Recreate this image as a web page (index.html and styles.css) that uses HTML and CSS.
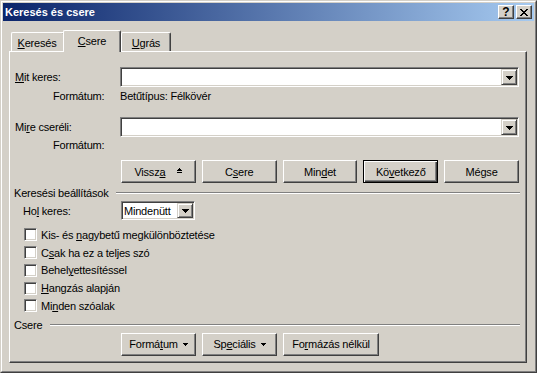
FILE: index.html
```html
<!DOCTYPE html>
<html lang="hu">
<head>
  <meta charset="UTF-8">
  <title>Keresés és csere</title>
  <link rel="stylesheet" href="styles.css">
</head>
<body>
<div class="window">
  <div class="frame">
    <div class="titlebar">
      <span class="title">Keresés és csere</span>
      <div class="tbtns">
        <span class="tbtn help">?</span>
        <span class="tbtn">
          <svg width="8" height="7" viewBox="0 0 8 7"><path d="M0 0h2v1h1v1h2V1h1V0h2v1H7v1H6v1H5v1h1v1h1v1h1v1H6V6H5V5H3v1H2v1H0V6h1V5h1V4h1V3H2V2H1V1H0z" fill="#000"/></svg>
        </span>
      </div>
    </div>

    <div class="client">
      <div class="tabs">
        <div class="tab first"><u>K</u>eresés</div>
        <div class="tab active"><u>C</u>sere</div>
        <div class="tab"><u>U</u>grás</div>
      </div>

      <div class="panel">
        <div class="row r-combo">
          <span class="lbl"><u>M</u>it keres:</span>
          <div class="combo"><span class="dd"><svg width="7" height="4" viewBox="0 0 7 4"><path d="M0 0h7v1H6v1H5v1H4v1H3V3H2V2H1V1H0z"/></svg></span></div>
        </div>
        <div class="row r-fmt">
          <span class="lbl sub">Formátum:</span>
          <span>Betűtípus: Félkövér</span>
        </div>
        <div class="row r-combo r-second">
          <span class="lbl">Mi<u>r</u>e cseréli:</span>
          <div class="combo"><span class="dd"><svg width="7" height="4" viewBox="0 0 7 4"><path d="M0 0h7v1H6v1H5v1H4v1H3V3H2V2H1V1H0z"/></svg></span></div>
        </div>
        <div class="row r-fmt2">
          <span class="lbl sub">Formátum:</span>
        </div>

        <div class="row btnrow">
          <span class="btn"><span>Vissz<u>a</u></span>
            <svg class="up" width="5" height="5" viewBox="0 0 5 5"><path d="M2 0h1v1h1v1h1v1H0V2h1V1h1zM0 4h5v1H0z"/></svg>
          </span>
          <span class="btn"><span>C<u>s</u>ere</span></span>
          <span class="btn"><span>Min<u>d</u>et</span></span>
          <span class="btn default"><span>Kö<u>v</u>etkező</span></span>
          <span class="btn"><span>Mégse</span></span>
        </div>

        <div class="row group">
          <span>Keresési beállítások</span>
          <span class="sep"></span>
        </div>

        <div class="row r-where">
          <span class="lbl where">Ho<u>l</u> keres:</span>
          <div class="combo small"><span class="val">Mindenütt</span><span class="dd"><svg width="7" height="4" viewBox="0 0 7 4"><path d="M0 0h7v1H6v1H5v1H4v1H3V3H2V2H1V1H0z"/></svg></span></div>
        </div>

        <div class="checks">
          <div class="chk"><span class="box"></span><span>Kis- és <u>n</u>agybetű megkülönböztetése</span></div>
          <div class="chk"><span class="box"></span><span>C<u>s</u>ak ha ez a teljes szó</span></div>
          <div class="chk"><span class="box"></span><span>Behel<u>y</u>ettesítéssel</span></div>
          <div class="chk"><span class="box"></span><span><u>H</u>angzás alapján</span></div>
          <div class="chk"><span class="box"></span><span>Mi<u>n</u>den szóalak</span></div>
        </div>

        <div class="row group group2">
          <span>Csere</span>
          <span class="sep"></span>
        </div>

        <div class="row btnrow btnrow2">
          <span class="btn"><span>Formá<u>t</u>um</span>
            <svg class="down" width="5" height="3" viewBox="0 0 5 3"><path d="M0 0h5v1H4v1H3v1H2V2H1V1H0z"/></svg>
          </span>
          <span class="btn"><span>Sp<u>e</u>ciális</span>
            <svg class="down" width="5" height="3" viewBox="0 0 5 3"><path d="M0 0h5v1H4v1H3v1H2V2H1V1H0z"/></svg>
          </span>
          <span class="btn wide"><span>Fo<u>r</u>mázás nélkül</span></span>
        </div>
      </div>
    </div>
  </div>
</div>
</body>
</html>
```

FILE: styles.css
```css
* {
  margin: 0;
  padding: 0;
  box-sizing: border-box;
}
body {
  font-family: "Liberation Sans", Arial, sans-serif;
  font-size: 11px;
  letter-spacing: -0.2px;
  color: #000;
  background: #d4d0c8;
}
u {
  text-decoration: underline;
  text-underline-offset: 1px;
}

/* window frame */
.window {
  width: 537px;
  height: 373px;
  border: 1px solid;
  border-color: #d4d0c8 #404040 #404040 #d4d0c8;
  background: #d4d0c8;
}
.frame {
  height: 100%;
  border: 1px solid;
  border-color: #fff #808080 #808080 #fff;
  padding: 1px;
  display: flex;
  flex-direction: column;
}
.titlebar {
  height: 18px;
  display: flex;
  align-items: center;
  justify-content: space-between;
  padding: 0 2px;
  background: linear-gradient(to right, #0a246a, #a6caf0);
}
.title {
  color: #fff;
  font-weight: bold;
  letter-spacing: 0;
}
.tbtns {
  display: flex;
  gap: 2px;
}
.tbtn {
  width: 16px;
  height: 14px;
  display: flex;
  align-items: center;
  justify-content: center;
  border: 1px solid;
  border-color: #fff #404040 #404040 #fff;
  box-shadow: inset -1px -1px #808080;
  background: #d4d0c8;
}
.tbtn svg {
  display: block;
}
.help {
  font-weight: bold;
  font-size: 12px;
  line-height: 12px;
  letter-spacing: 0;
}

/* client */
.client {
  flex: 1;
  display: flex;
  flex-direction: column;
  padding: 9px 7px 7px 6px;
}
.tabs {
  height: 21px;
  display: flex;
  align-items: flex-end;
  padding-left: 2px;
}
.tab {
  height: 19px;
  width: 50px;
  padding-top: 3px;
  line-height: 14px;
  text-align: center;
  border-top: 1px solid #fff;
  border-left: 1px solid #fff;
  border-right: 1px solid #404040;
  border-radius: 2px 2px 0 0;
  box-shadow: inset -1px 0 #808080;
}
.tab.first {
  width: 54px;
  padding-right: 2px;
}
.tab.active {
  width: 58px;
  height: 22px;
  margin-left: -2px;
  margin-bottom: -1px;
  position: relative;
  background: #d4d0c8;
}
.panel {
  height: 312px;
  border: 1px solid;
  border-color: #fff #404040 #404040 #fff;
  box-shadow: inset -1px -1px #808080;
  padding: 15px 7px 0 5px;
  display: flex;
  flex-direction: column;
}

/* rows */
.row {
  display: flex;
  align-items: center;
}
.lbl {
  width: 105px;
  flex: none;
}
.lbl.sub {
  padding-left: 38px;
}
.r-combo {
  height: 20px;
}
.r-second {
  margin-top: 12px;
}
.r-fmt {
  height: 18px;
}
.r-fmt2 {
  height: 16px;
}
.combo {
  flex: 1;
  height: 20px;
  display: flex;
  align-items: center;
  justify-content: flex-end;
  padding: 1px;
  border: 1px solid;
  border-color: #808080 #fff #fff #808080;
  box-shadow: inset 1px 1px #404040, inset -1px -1px #d4d0c8;
  background: #fff;
}
.dd {
  width: 16px;
  height: 16px;
  display: flex;
  align-items: center;
  justify-content: center;
  border: 1px solid;
  border-color: #d4d0c8 #404040 #404040 #d4d0c8;
  box-shadow: inset 1px 1px #fff, inset -1px -1px #808080;
  background: #d4d0c8;
}
.dd svg {
  display: block;
  margin-top: 1px;
}
.combo.small {
  flex: none;
  width: 74px;
  height: 19px;
  justify-content: space-between;
}
.combo.small .dd {
  height: 15px;
}
.val {
  padding-left: 1px;
}

/* buttons */
.btnrow {
  margin-top: 7px;
  padding-left: 106px;
  gap: 6px;
}
.btnrow2 {
  margin-top: 1px;
}
.btn {
  width: 75px;
  height: 23px;
  display: flex;
  align-items: center;
  justify-content: center;
  border: 1px solid;
  border-color: #fff #404040 #404040 #fff;
  box-shadow: inset -1px -1px #808080;
  background: #d4d0c8;
}
.btn.default {
  border-color: #000;
  box-shadow: inset 1px 1px #fff, inset -1px -1px #404040, inset -2px -2px #808080;
}
.btn.wide {
  width: 96px;
}
.btn .up {
  margin-left: 12px;
  margin-bottom: 2px;
}
.btn .down {
  margin-left: 5px;
}

/* groups */
.group {
  height: 14px;
  margin-top: 3px;
  margin-left: -1px;
}
.sep {
  flex: 1;
  margin-left: 8px;
  margin-right: -1px;
  border-top: 1px solid #808080;
  border-bottom: 1px solid #fff;
}
.r-where {
  height: 19px;
  margin-top: 1px;
}
.lbl.where {
  width: 106px;
  padding-left: 8px;
}

/* checkboxes */
.checks {
  margin-top: 6px;
  padding-left: 9px;
}
.chk {
  height: 17.75px;
  display: flex;
  align-items: center;
  gap: 4px;
}
.box {
  width: 13px;
  height: 13px;
  border: 1px solid;
  border-color: #808080 #fff #fff #808080;
  box-shadow: inset 1px 1px #404040, inset -1px -1px #d4d0c8;
  background: #fff;
}
```
